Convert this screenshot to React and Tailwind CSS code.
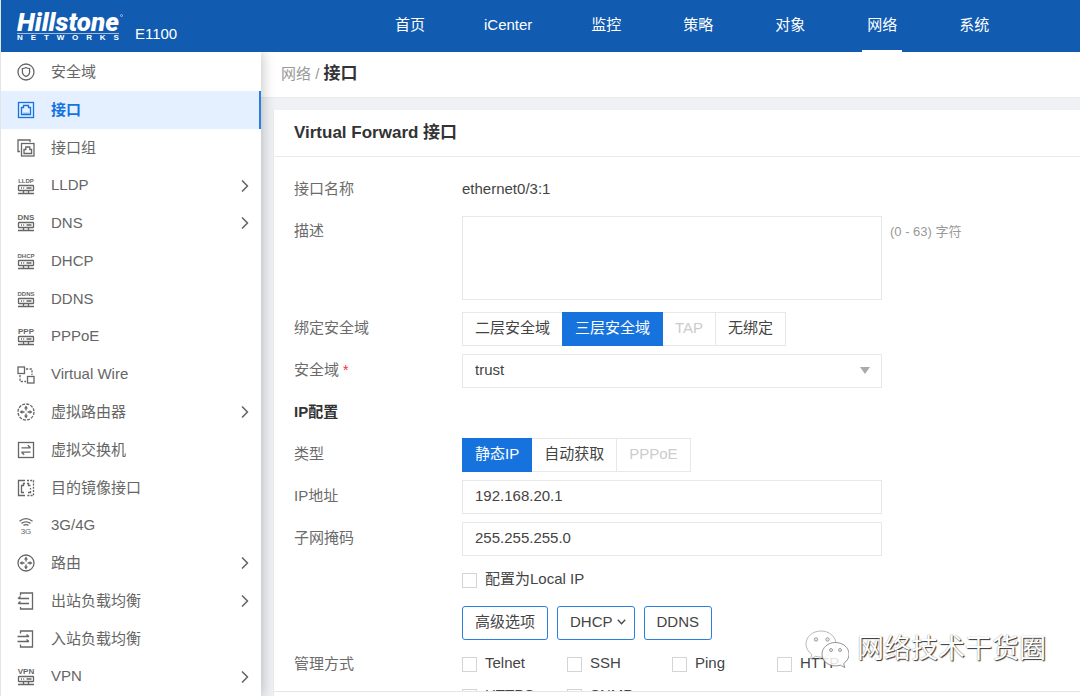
import React, { useState } from "react";
import { ChevronRight } from "lucide-react";

const Icon = ({ children }) => (
  <svg
    viewBox="0 0 18 18"
    className="w-[18px] h-[18px] shrink-0 overflow-visible"
    fill="none"
    stroke="currentColor"
    strokeWidth="1.3"
    aria-hidden="true"
  >
    {children}
  </svg>
);

// small server with the protocol name on top
const ServerIcon = ({ name, size = 6 }) => (
  <Icon>
    <text
      x="9"
      y="6"
      textAnchor="middle"
      fontSize={size}
      fontWeight="bold"
      fill="currentColor"
      stroke="none"
    >
      {name}
    </text>
    <rect x="1.5" y="8.5" width="15" height="5" rx="0.6" />
    <path d="M4 11h1M6.2 11h1M9.5 11h5M6.5 13.5v3M11.5 13.5v3M1 16.5h16" />
  </Icon>
);

const RouterArrows = () => (
  <>
    <path d="M9 7.5V3.8M9 10.5v3.7M7.5 9H3.8M10.5 9h3.7" />
    <path
      d="M9 2.6l2 2.8H7zM9 15.4l2-2.8H7zM2.6 9l2.8-2v4zM15.4 9l-2.8-2v4z"
      fill="currentColor"
      stroke="none"
    />
  </>
);

const ZoneIcon = () => (
  <Icon>
    <circle cx="9" cy="9" r="8" />
    <path d="M5.4 5.6Q7.5 5.4 9 4.5Q10.5 5.4 12.6 5.6V9.5Q12.4 12 9 13.5Q5.6 12 5.4 9.5Z" />
  </Icon>
);

const PortIcon = () => (
  <Icon>
    <rect x="1.5" y="1.5" width="15" height="15" />
    <path d="M4.5 13.5v-7h2v-2h5v2h2v7z" />
    <path d="M7 13.5v-2M9 13.5v-2M11 13.5v-2" strokeWidth="0.7" />
  </Icon>
);

const PortGroupIcon = () => (
  <Icon>
    <path d="M3 12.5H1V1h12v2" />
    <rect x="4.5" y="4.5" width="12.5" height="12.5" />
    <path d="M7 14.5v-4h1.8V8h4v2.5h1.8v4z" />
  </Icon>
);

const WireIcon = () => (
  <Icon>
    <rect x="1" y="1" width="6.5" height="6.5" />
    <rect x="10.5" y="10.5" width="6.5" height="6.5" />
    <path d="M9 3h6v6M3 9v6.5h6" strokeDasharray="2.2 1.4" />
  </Icon>
);

const VRouterIcon = () => (
  <Icon>
    <circle cx="9" cy="9" r="8" strokeDasharray="3 1.2" />
    <RouterArrows />
  </Icon>
);

const RouteIcon = () => (
  <Icon>
    <circle cx="9" cy="9" r="8" />
    <RouterArrows />
  </Icon>
);

const SwitchIcon = () => (
  <Icon>
    <rect x="1.5" y="1.5" width="15" height="15" />
    <path d="M4.5 6.8h9M10.8 4.2l2.7 2.6M13.5 11.2h-9M7.2 13.8l-2.7-2.6" />
  </Icon>
);

const MirrorIcon = () => (
  <Icon>
    <path d="M8 1.5H1.5v15H8M8 4.5H6.5v2h-2v7H7" />
    <path d="M10 1.5h6.5v15H10" strokeDasharray="2 1.2" />
    <path d="M10 4.5h1.5v2h2M13.5 9v1.500M13.5 12v1.5H11" />
  </Icon>
);

const MobileIcon = () => (
  <Icon>
    <path d="M2.5 4.2Q9-.8 15.5 4.2M4.5 6.4Q9 3.2 13.5 6.4M6.5 8.4Q9 6.8 11.5 8.4" />
    <text
      x="9"
      y="17"
      textAnchor="middle"
      fontSize="8"
      fill="currentColor"
      stroke="none"
    >
      3G
    </text>
  </Icon>
);

const OutboundIcon = () => (
  <Icon>
    <path d="M3.5 3.500V1h12v16h-12v-2M12 6.500H1.500M12 11.500H1.500M3.500 4.500l-2.500 2M3.500 9.500l-2.500 2" />
  </Icon>
);

const InboundIcon = () => (
  <Icon>
    <path d="M3.5 3.500V1h12v16h-12v-2.500M.500 6.500H12M.500 11.500H12M9.500 4.500l2.500 2M9.500 9.500l2.500 2" />
  </Icon>
);

const topMenu = ["首页", "iCenter", "监控", "策略", "对象", "网络", "系统"];

const sideMenu = [
  { label: "安全域", icon: <ZoneIcon /> },
  { label: "接口", icon: <PortIcon /> },
  { label: "接口组", icon: <PortGroupIcon /> },
  { label: "LLDP", icon: <ServerIcon name="LLDP" />, more: true },
  { label: "DNS", icon: <ServerIcon name="DNS" size={8} />, more: true },
  { label: "DHCP", icon: <ServerIcon name="DHCP" /> },
  { label: "DDNS", icon: <ServerIcon name="DDNS" /> },
  { label: "PPPoE", icon: <ServerIcon name="PPP" size={8} /> },
  { label: "Virtual Wire", icon: <WireIcon /> },
  { label: "虚拟路由器", icon: <VRouterIcon />, more: true },
  { label: "虚拟交换机", icon: <SwitchIcon /> },
  { label: "目的镜像接口", icon: <MirrorIcon /> },
  { label: "3G/4G", icon: <MobileIcon /> },
  { label: "路由", icon: <RouteIcon />, more: true },
  { label: "出站负载均衡", icon: <OutboundIcon />, more: true },
  { label: "入站负载均衡", icon: <InboundIcon /> },
  { label: "VPN", icon: <ServerIcon name="VPN" size={8} />, more: true },
];

const zoneTypes = [
  { label: "二层安全域" },
  { label: "三层安全域" },
  { label: "TAP", disabled: true },
  { label: "无绑定" },
];

const ipTypes = [
  { label: "静态IP" },
  { label: "自动获取" },
  { label: "PPPoE", disabled: true },
];

const manageTypes = ["Telnet", "SSH", "Ping", "HTTP", "HTTPS", "SNMP"];

const inputClass =
  "block w-full max-w-[420px] border border-[#e6e8eb] bg-white px-3 text-[#444] outline-none focus:border-[#1673de]";

const buttonClass =
  "flex h-[34px] items-center gap-1 rounded-[3px] border border-[#2b7de0] pb-0.5 pl-3";

const Row = ({ label, htmlFor, required, children }) => (
  <div className="flex">
    <label htmlFor={htmlFor} className="w-[168px] shrink-0 leading-8 text-[#6b6b6b]">
      {label}
      {required && <span className="ml-1 text-sm text-red-500">*</span>}
    </label>
    <div className="min-h-[34px] min-w-0 flex-1">{children}</div>
  </div>
);

const Segment = ({ name, options, value, onChange }) => (
  <div className="flex" role="group" aria-label={name}>
    {options.map((o, i) => (
      <button
        key={o.label}
        type="button"
        disabled={o.disabled}
        onClick={() => onChange(o.label)}
        className={`h-[34px] border px-3 pb-0.5 ${i > 0 ? "-ml-px" : ""} ${
          value === o.label
            ? "relative border-[#1673de] bg-[#1673de] text-white"
            : o.disabled
              ? "border-[#e6e8eb] text-[#ccc]"
              : "border-[#e6e8eb] text-[#444] hover:bg-[#f9fbff]"
        }`}
      >
        {o.label}
      </button>
    ))}
  </div>
);

const Check = ({ label }) => (
  <label className="flex h-8 w-[105px] items-center gap-2 whitespace-nowrap text-[#444]">
    <input
      type="checkbox"
      className="h-[15px] w-[15px] shrink-0 appearance-none border border-[#d4d4d4] bg-white checked:bg-[#1673de]"
    />
    <span className="pb-px">{label}</span>
  </label>
);

const Header = () => (
  <header className="relative z-20 flex h-[52px] shrink-0 bg-[#115bb1] text-white">
    <div className="flex w-[363px] shrink-0 pl-4">
      <div className="pt-3">
        <div className="relative border-b border-white/60 font-['Roboto','Liberation_Sans',sans-serif] text-[26px] leading-[21px] font-black italic">
          Hillstone
          <span className="absolute top-0.5 -right-1 h-[3px] w-[3px] rounded-full border border-white/50"></span>
        </div>
        <div className="flex justify-between text-[8px] leading-[8px] font-bold">
          {["N", "E", "T", "W", "O", "R", "K", "S"].map((c) => (
            <span key={c}>{c}</span>
          ))}
        </div>
      </div>
      <span className="ml-4 pt-[25px] leading-[18px]">E1100</span>
    </div>
    <nav className="flex">
      {topMenu.map((item) => (
        <a
          key={item}
          href="#"
          className="relative flex min-w-[92px] justify-center px-7 leading-[49px] whitespace-nowrap"
        >
          {item}
          {item === "网络" && (
            <span className="absolute inset-x-[26px] bottom-0 h-0.5 bg-white"></span>
          )}
        </a>
      ))}
    </nav>
  </header>
);

const Sidebar = () => {
  const [active, setActive] = useState("接口");

  return (
    <aside className="relative z-10 w-[260px] shrink-0 bg-white py-px shadow-[2px_0_12px_rgba(0,0,0,0.22)]">
      <ul className="flex h-full flex-col">
        {sideMenu.map((item) => (
          <li key={item.label} className="flex min-h-8 flex-1">
            <a
              href="#"
              onClick={() => setActive(item.label)}
              className={`flex flex-1 items-center gap-4 border-r-2 pt-px pr-1 pl-4 ${
                active === item.label
                  ? "border-[#2b7de0] bg-[#e4f0ff] font-bold text-[#1673de]"
                  : "border-transparent text-[#666]"
              }`}
            >
              {item.icon}
              <span className="flex-1">{item.label}</span>
              {item.more && <ChevronRight size={20} strokeWidth={2} />}
            </a>
          </li>
        ))}
      </ul>
    </aside>
  );
};

const InterfaceForm = () => {
  const [zoneType, setZoneType] = useState("三层安全域");
  const [ipType, setIpType] = useState("静态IP");
  const [ip, setIp] = useState("192.168.20.1");
  const [mask, setMask] = useState("255.255.255.0");

  return (
    <form className="flex flex-col gap-2 px-5 pt-4">
      <Row label="接口名称">
        <p className="leading-8 text-[#444]">ethernet0/3:1</p>
      </Row>
      <Row label="描述" htmlFor="desc">
        <div className="flex gap-2 pt-px pb-1">
          <textarea id="desc" className={`${inputClass} h-[84px] resize-none`} />
          <span className="shrink-0 text-[13px] leading-8 text-[#999]">
            (0 - 63) 字符
          </span>
        </div>
      </Row>
      <Row label="绑定安全域">
        <Segment
          name="绑定安全域"
          options={zoneTypes}
          value={zoneType}
          onChange={setZoneType}
        />
      </Row>
      <Row label="安全域" htmlFor="zone" required>
        <div className="relative max-w-[420px]">
          <select id="zone" className={`${inputClass} h-[34px] appearance-none pb-0.5`}>
            <option>trust</option>
          </select>
          <svg
            viewBox="0 0 10 7"
            className="pointer-events-none absolute top-[13px] right-3 h-[7px] w-[10px] fill-[#aaa]"
          >
            <path d="M0 0h10L5 7z" />
          </svg>
        </div>
      </Row>
      <h3 className="h-[34px] leading-8 font-bold text-[#333]">IP配置</h3>
      <Row label="类型">
        <Segment name="类型" options={ipTypes} value={ipType} onChange={setIpType} />
      </Row>
      <Row label="IP地址" htmlFor="ip">
        <input
          id="ip"
          value={ip}
          onChange={(e) => setIp(e.target.value)}
          className={`${inputClass} h-[34px] pb-1`}
        />
      </Row>
      <Row label="子网掩码" htmlFor="mask">
        <input
          id="mask"
          value={mask}
          onChange={(e) => setMask(e.target.value)}
          className={`${inputClass} h-[34px] pb-1`}
        />
      </Row>
      <Row>
        <Check label="配置为Local IP" />
      </Row>
      <Row>
        <div className="flex gap-[9px] text-[#444]">
          <button type="button" className={`${buttonClass} pr-3`}>
            高级选项
          </button>
          <button type="button" className={`${buttonClass} pr-2`}>
            DHCP
            <svg
              viewBox="0 0 9 6"
              className="h-[6px] w-[9px] fill-none stroke-[#444]"
              strokeWidth="1.3"
            >
              <path d="M0.8 0.8l3.7 3.9l3.7-3.9" />
            </svg>
          </button>
          <button type="button" className={`${buttonClass} pr-3`}>
            DDNS
          </button>
        </div>
      </Row>
      <Row label="管理方式">
        <div className="grid max-w-[420px] grid-cols-4">
          {manageTypes.map((m) => (
            <Check key={m} label={m} />
          ))}
        </div>
      </Row>
    </form>
  );
};

const Watermark = () => (
  <div className="pointer-events-none absolute right-[34px] bottom-7 z-20 flex items-center gap-2">
    <svg
      viewBox="0 0 44 38"
      className="h-[38px] w-[44px] fill-white stroke-[#999]"
      strokeWidth="0.7"
    >
      <path d="M16 1C7.5 1 1 6.8 1 14c0 4.2 2.2 7.8 5.8 10.3L5.5 29l5-2.7c1.8.5 3.6.8 5.5.8 8.5 0 15-5.9 15-13.1S24.5 1 16 1z" />
      <path
        d="M30.5 12.5C23 12.5 17 17.6 17 24.2s6 11.7 13.5 11.7c1.7 0 3.3-.3 4.8-.7l4.5 2.3-1.2-3.9c3.3-2.2 5.4-5.5 5.4-9.4 0-6.6-6-11.7-13.5-11.7z"
        stroke="#666"
        fillOpacity="0.85"
      />
      <g className="fill-[#eee]" stroke="#777">
        <circle cx="11" cy="9.5" r="1.7" />
        <circle cx="22.5" cy="9.5" r="1.7" />
        <circle cx="26" cy="20" r="1.5" />
        <circle cx="35" cy="20" r="1.5" />
      </g>
    </svg>
    <span className="text-[27px] leading-8 text-white [text-shadow:1px_1px_1px_#333,0_0_1px_#888]">
      网络技术干货圈
    </span>
  </div>
);

const App = () => {
  return (
    <div className="relative flex h-screen flex-col overflow-hidden border-l border-[#e4e4e4] bg-[#eff1f5] font-['Liberation_Sans','Noto_Sans_CJK_SC',sans-serif] text-[15px]">
      <Header />
      <div className="flex min-h-0 flex-1">
        <Sidebar />
        <main className="flex min-w-0 flex-1 flex-col">
          <div className="h-[46px] shrink-0 border-b border-[#e8eaec] bg-white pl-5 leading-[44px] text-[#999]">
            网络 / <b className="text-[17px] text-[#333]">接口</b>
          </div>
          <section className="mt-3 ml-3 flex min-h-0 flex-1 flex-col border-l border-[#e8eaec] bg-white">
            <h2 className="h-[47px] shrink-0 border-b border-[#e8eaec] px-5 leading-[46px] text-[17px] font-bold text-[#333]">
              Virtual Forward 接口
            </h2>
            <div className="min-h-0 flex-1 overflow-hidden">
              <InterfaceForm />
            </div>
            <footer className="h-[5px] shrink-0 border-t border-[#e4e6e8]"></footer>
          </section>
        </main>
      </div>
      <Watermark />
    </div>
  );
};

export default App;
